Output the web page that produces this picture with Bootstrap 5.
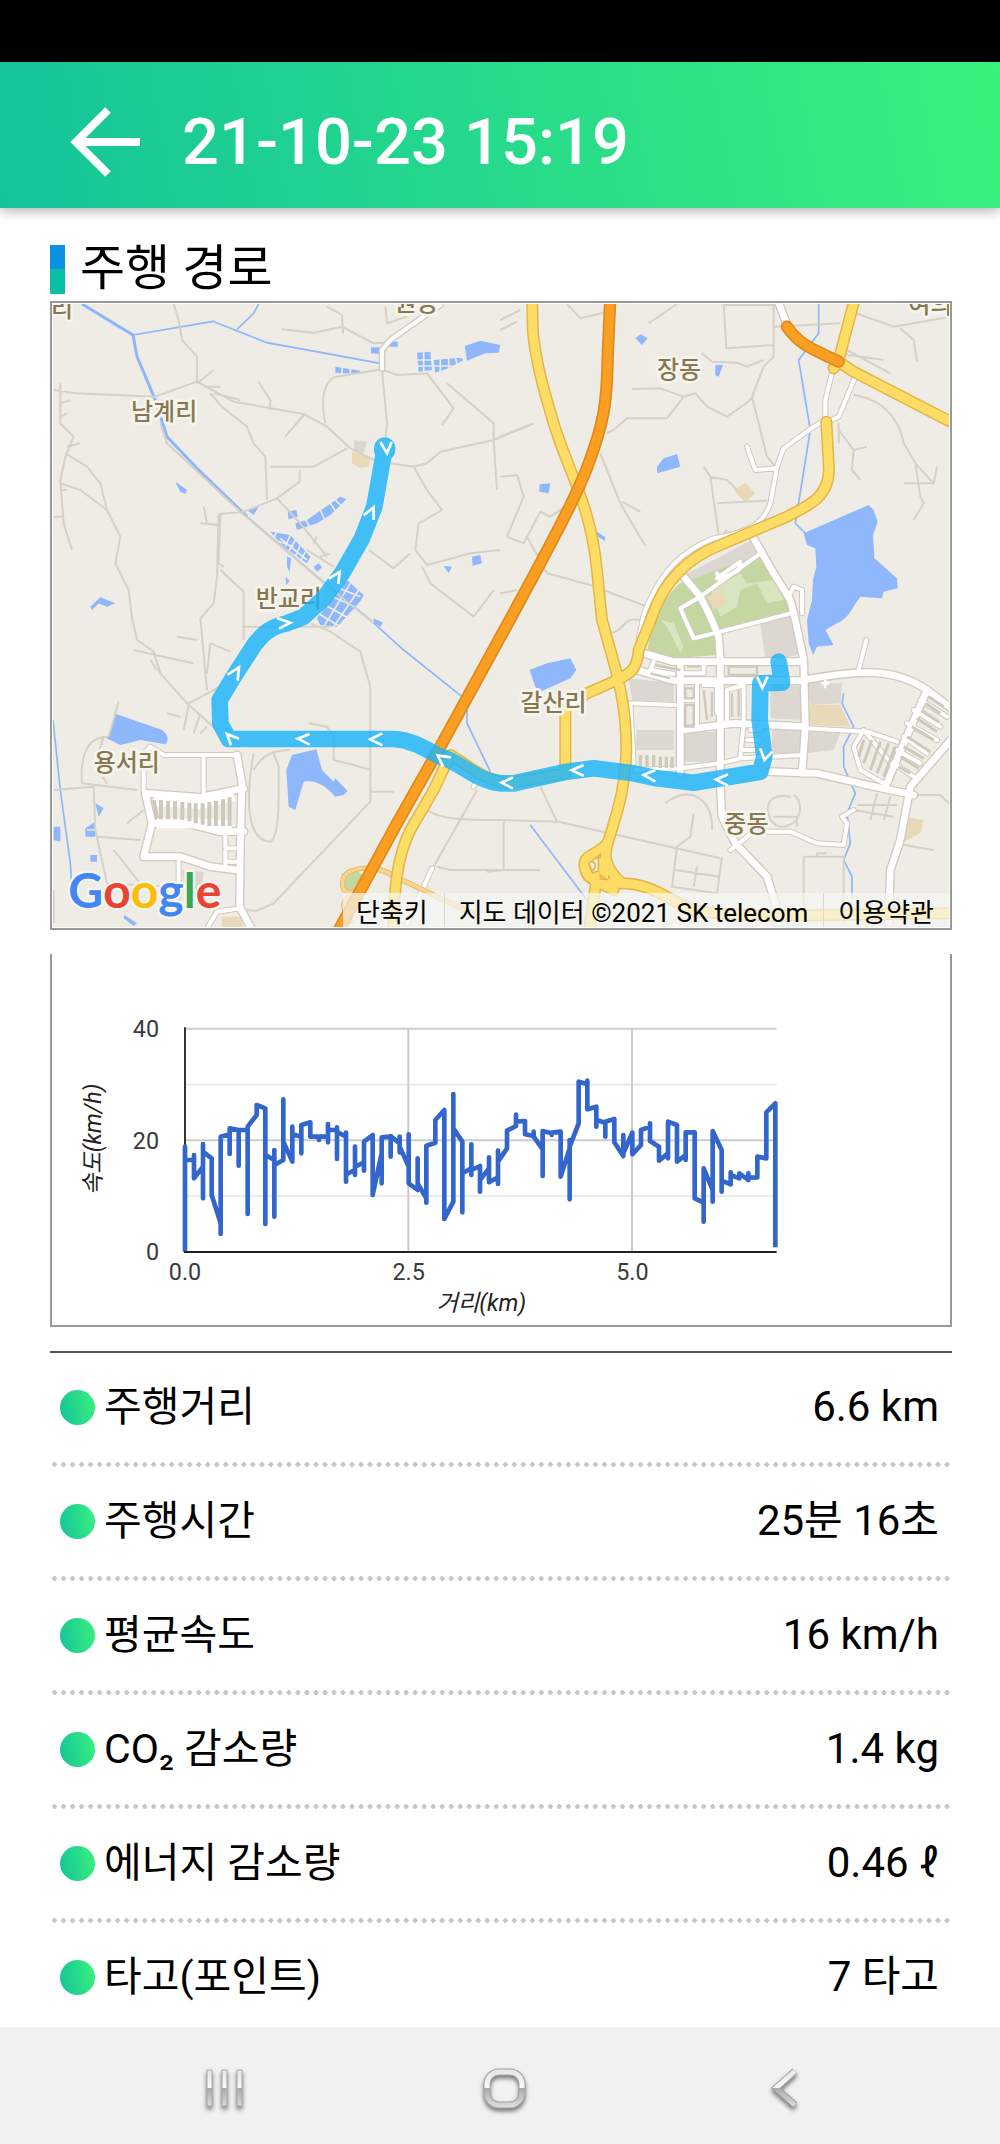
<!DOCTYPE html>
<html lang="ko">
<head>
<meta charset="utf-8">
<meta name="viewport" content="width=device-width, initial-scale=1">
<title>주행 기록</title>
<link href="https://cdn.jsdelivr.net/npm/bootstrap@5.3.0/dist/css/bootstrap.min.css" rel="stylesheet">
<style>
body{font-family:Roboto,"Noto Sans CJK KR",sans-serif;color:#000;background:#fff}
.statusbar{height:62px;background:#000}
.appbar{height:146px;padding:14px 66px 0;gap:36px;background:linear-gradient(80deg,#14c39a,#39f17c);box-shadow:0 2px 12px rgba(0,0,0,.35)}
.appbar h1{font-size:65px;line-height:80px;font-weight:500;color:#fff}
.back-btn{width:80px;height:80px}
.page{padding:29px 48px 0 50px}
.section-title{height:64px;font-size:49px;line-height:60px;gap:15px;font-weight:400}
.title-bar{width:15px;height:49px;background:linear-gradient(#0d90e0 50%,#08c1a4 50%)}
.map-box{border:2px solid #999;padding:1px}
.map-box svg,.chart-box svg{display:block;width:100%;height:auto}
.attribution{right:1px;bottom:1px;height:34px;background:rgba(245,245,243,.72);font-size:26px;line-height:40px;padding:0 0 0 13px}
.attribution a{color:#000;text-decoration:none;padding-right:16px}
.attribution a+a{border-left:1px solid #dcd9cf;padding-left:14px;padding-right:15px}
.chart-box{border:2px solid #999;border-top:0;margin-top:24px}
.stats{margin-top:24px;border-top:2px solid #555}
.stats li{padding:31px 13px 37px 10px;font-size:41px;line-height:46px;position:relative}
.stats li:not(:last-child)::after{content:"";position:absolute;left:0;right:0;bottom:0;height:5px;background:radial-gradient(circle closest-side,#c6c6c6 90%,transparent) 0 0/9px 5px round}
.stats li:last-child{padding-bottom:27px}
.bullet{width:35px;height:35px;border-radius:50%;margin-right:9px;background:linear-gradient(80deg,#14c39a,#39f17c)}
.stat-value{font-size:42px}
.navkeys{height:117px;background:#f1f1f1;padding:4px 174px 0 182px}
.navkeys button{width:84px;height:84px}
.navkeys button svg{filter:drop-shadow(0 3px 2px rgba(0,0,0,.5))}
.place{font:500 72px "Noto Sans CJK KR",sans-serif;fill:#877850;stroke:#f6f4ee;stroke-width:16;stroke-linejoin:round;paint-order:stroke}
.brand{font:700 144px Lato,sans-serif;stroke:#f6f4ee;stroke-width:14;stroke-linejoin:round;paint-order:stroke}
.lane{fill:none;stroke:#d5d1c7;stroke-width:6;stroke-linejoin:round}
.wline{fill:none;stroke:#8db6fb;stroke-width:5}
.case,.fillr{fill:none;stroke-linejoin:round;stroke-linecap:round}
.tick{font:70px Roboto,sans-serif;fill:#3a3a3a}
.axis-name{font:italic 70px Roboto,"Noto Sans CJK KR",sans-serif;fill:#222}
</style>
<script src="https://cdn.jsdelivr.net/npm/bootstrap@5.3.0/dist/js/bootstrap.bundle.min.js"></script>
</head>
<body>
<div class="statusbar"></div>
<header class="appbar d-flex align-items-center position-relative">
  <button class="back-btn btn p-0 border-0" type="button" aria-label="뒤로">
    <svg width="80" height="80" viewBox="0 0 80 80" fill="none" stroke="#fff" stroke-width="8"><path d="M42 8 10 40 42 72M10 40H74"/></svg>
  </button>
  <h1 class="m-0">21-10-23 15:19</h1>
</header>

<main class="page">
  <h2 class="section-title d-flex align-items-center m-0"><span class="title-bar"></span>주행 경로</h2>

  <div class="map-box position-relative">
    <svg viewBox="38 42 2688 1869" role="img" aria-label="주행 경로 지도">
      <defs>
        <!-- white streets -->
        <g id="wide">
          <path d="M2212 30 2242 110M2140 745 2200 850 2250 930 2265 990 2290 1110 2295 1310 2285 1450M1930 860 1980 920 2010 980 2035 1040 2040 1120V1490L2045 1580 2085 1660 2180 1760 2205 1840 2210 1900M1810 1090 1900 1115H2290M1790 1140 1900 1172 2280 1172C2450 1140 2560 1130 2660 1200L2740 1260M1925 1320 2080 1300 2295 1310M1920 1115V1450M2190 1445 2330 1450 2480 1485 2620 1515M2740 1340 2610 1490 2580 1650 2550 1740 2545 1900M2660 1200 2560 1430 2540 1480M315 1510 480 1522 610 1495M590 1395 605 1480 600 1660 598 1850 640 1930M315 1510 335 1600 310 1700 420 1700 510 1730 590 1740M335 1600 440 1600 540 1625 610 1625"/>
        </g>
        <g id="thin">
          <path d="M2375 250 2355 330V390L2320 410 2230 475 2210 530 2190 640C2170 700 2130 725 2020 745 1930 780 1860 840 1810 975L1795 1050M2445 260 2395 380 2355 400M2120 470 2145 540 2210 535M2160 790 1980 920 1920 955 1960 1045 2020 1030 2260 968M2285 970V900L2260 890 2250 910M2030 865 2100 815 2095 840 2040 870 2030 850M2295 1315 2480 1325 2570 1355M2455 1140 2478 1050M2095 1660 2140 1625 2250 1625 2330 1660 2410 1665 2420 1600 2405 1580 2440 1560M2070 1680 2115 1645M1780 1240 1905 1245M1770 1240 1780 1420M1785 1440 1920 1435 2040 1420 2100 1405 2290 1395M2050 1115V1110M310 1505V1390L330 1370 370 1395H590M490 1395V1505M415 1710V1820M500 1915 530 1865 600 1855M555 1625V1670M590 1625H615M560 1675H590M560 1715H590M555 1680V1725M1175 1735 1100 1900M1300 1490 1312 1465"/>
          <path d="M1840 1115 1830 1140 1900 1152M1990 1122V1150H1930M1970 1180V1300M1990 1185H2030V1270M2110 1185 2060 1200V1290M2110 1185V1290M2110 1300 2100 1400M2130 1320H2160M2120 1350H2160M2110 1380H2160M1925 1230H1965M2560 1430 2470 1320 2440 1370 2460 1440 2530 1480M2640 1230 2720 1280M2620 1260 2700 1310M2600 1300 2690 1350M2590 1340 2660 1390M2570 1380 2640 1420M2560 1420 2620 1460"/>
        </g>
        <g id="yellow"><path d="M1475 20 1478 130C1490 240 1520 330 1540 400 1570 500 1620 600 1640 680 1670 780 1672 880 1685 990L1710 1080C1745 1200 1758 1280 1758 1380 1755 1480 1740 1540 1705 1650 1690 1690 1690 1730 1740 1775M2358 395 2366 540C2364 620 2310 645 2240 680L2040 765C1950 800 1870 870 1835 980L1795 1080C1790 1140 1770 1150 1730 1170L1640 1210 1575 1250V1450L1400 1480C1330 1470 1290 1430 1230 1395L1180 1500 1110 1620C1070 1700 1060 1800 1060 1930M2445 20 2395 210 2380 235M2395 215 2440 245 2740 400M1700 1660C1670 1700 1620 1690 1635 1740 1645 1780 1700 1780 1740 1780 1840 1780 1880 1830 1960 1860 2100 1890 2500 1870 2740 1870M1670 1760 1645 1930M1690 1680V1775M1660 1770 1720 1800"/></g>
        <g id="orange"><path d="M1710 20 1702 200C1700 340 1690 400 1645 520 1610 620 1500 820 1408 990L1200 1370 1070 1600 890 1930M2240 110C2275 160 2300 170 2395 215"/></g>
      </defs>
      <rect x="38" y="42" width="2688" height="1869" fill="#eeece4"/>

      <!-- built-up blocks and parks -->
      <g fill="#dcd7d1">
        <path d="M1940 850 2040 800 2140 745 2160 790 2030 860 1975 900zM2160 1000 2255 975 2275 1095 2175 1110zM1765 1165 1900 1180V1235L1775 1230zM1925 1330 2030 1325V1415H1925zM2300 1175 2405 1180 2400 1240 2310 1245zM2190 1180 2280 1190 2285 1290 2190 1285zM2195 1320 2285 1320 2280 1390 2195 1390zM2300 1320 2400 1330 2380 1380 2300 1390zM1790 1320H1900V1380H1785zM425 1740 490 1745 485 1800 430 1790zM940 450 980 455 970 490 940 480z"/>
      </g>
      <path d="M1920 880 2160 795 2190 830 2250 930 2260 968 2020 1030 2030 1095 1900 1105 1820 1085C1840 990 1870 920 1920 880z" fill="#c5d7a0"/>
      <path d="M2010 900 2100 850 2120 880 2200 870 2230 930 2180 940 2150 880 2100 900 2090 950 2040 980zM1860 990 1900 1000 1930 1070 1920 1090 1880 1010z" fill="#d9e4c0"/>
      <path d="M2000 920 2040 900 2060 940 2020 960zM2310 1245 2400 1245 2430 1310 2300 1305zM2590 1580 2650 1590 2640 1630 2590 1655zM935 485 990 500 985 530 960 535 935 520zM2080 600 2115 578 2145 610 2115 638zM545 1880 600 1880 610 1912 545 1912z" fill="#ead9b8"/>
      <path d="M905 1750 950 1740 980 1770 950 1800 910 1810z" fill="#c5d7a0"/>

      <!-- lakes, reservoirs and paddies -->
      <g fill="#8fb7fc">
        <path d="M2290 730 2485 645 2500 660 2512 695 2498 735 2502 805 2570 865 2572 895 2530 905 2525 925 2460 920C2430 960 2430 980 2390 1000L2355 1020 2380 1065 2330 1070 2318 1095 2305 1060 2300 990 2315 930 2318 870 2328 830 2325 775 2300 765z"/>
        <path d="M1468 1140 1520 1120 1590 1105 1608 1140 1590 1165 1500 1205 1485 1190zM228 1272 350 1315C380 1320 390 1350 375 1363L300 1350 240 1365 200 1345zM755 1395 828 1378 845 1440 880 1475 885 1465 922 1503 910 1515 885 1520C850 1480 820 1470 790 1475L765 1560 745 1550 738 1440zM1273 168 1320 152 1380 165 1375 188 1335 190 1280 212zM1850 530 1870 505 1910 492 1920 530 1850 550zM1785 145 1800 133 1822 145 1805 165zM2025 225H2048L2035 260 2025 255zM1498 583 1530 580 1525 610 1497 605zM1665 722 1695 742 1693 753 1665 735zM1295 800 1320 795 1325 820 1297 827zM1130 188 1170 185 1175 240 1135 245zM1180 210 1260 203 1270 210 1225 235 1185 248zM885 230 960 242 955 252 885 248zM992 172H1018V192L992 190zM1040 155H1072V170H1045zM742 665 768 660 772 680 745 688zM800 690 900 620 918 628 870 675 830 700 770 720 765 700zM150 950 180 922 225 940 200 950 175 940 155 960zM405 575 440 600 435 612 420 605zM620 660 655 650 640 675zM690 725 750 735 810 800 800 820 730 770zM820 830 835 820 845 832 830 845zM830 985 920 870 970 915 960 935 890 1010 840 1005zM165 1540 190 1555 175 1580zM40 1610H60V1655L40 1650zM135 1615 165 1595V1640H135zM150 1695H170V1715H150zM1000 985 1028 998 1020 1010 1000 997zM252 1875 290 1900 280 1908 250 1885zM1210 828 1235 830 1225 850zM740 800 752 805 748 845 740 830zM735 860 748 872 738 885z"/>
      </g>
      <!-- dykes between the paddies -->
      <g fill="none" stroke="#eeece4" stroke-width="5">
        <path d="M1150 180V250M1130 210H1180M1130 228H1240M1200 205V250M1225 205V250M1245 200 1250 225M905 225V255M930 225V255M790 680 815 720M840 660 860 705M870 640 890 670M885 630 905 650M690 745 760 770M715 715 700 745M750 735 735 770M765 750 745 785M780 765 765 800M795 785 780 815M720 745 800 810M825 965 900 1010M845 940 925 985M865 915 945 950M885 890 960 920M850 1010 930 880M880 1010 955 900M905 1005 970 925M140 1620H170"/>
      </g>
      <g class="wline">
        <path d="M125 42 220 100 278 135 290 200 345 330 380 440 480 545 620 680" stroke-width="9"/>
        <path d="M278 135 518 94 680 158 1020 220M590 118 640 70 655 42M620 680 830 860 990 990 1090 1080 1265 1220M1280 1260V1300L1350 1445M2335 40V130L2275 210 2310 420 2265 700 2300 735M2410 1210 2405 1240 2440 1310 2410 1370V1430L2445 1510 2420 1570 2430 1660 2410 1710 2435 1760V1820M1470 1605 1640 1830M38 1290 60 1500 90 1720 95 1800"/>
      </g>

      <!-- lanes -->
      <g class="lane">
        <path d="M400 42 415 90 425 150 470 200V275L345 320 105 310 40 300M470 275 580 335 790 372 860 410 930 475 1000 510M510 310 545 350 620 410 640 460 675 500 680 630M360 400 380 460 600 665 840 870 1000 1000M725 118 820 128 905 110 1000 160 1035 158M860 50 905 75 908 130M655 275 690 330 688 360M735 440 790 375M855 400C840 330 850 280 880 262L1025 238 1070 255 1160 250 1240 355 1205 405M1025 238 1040 400 1035 450M1050 520 1120 530 1160 520 1200 485 1360 450 1480 400M1220 280 1360 400V450L1370 600M1120 530 1160 600 1205 660 1135 700 1125 780 1160 825 1290 790 1380 780M985 780 1060 835 1110 790M1145 830 1170 880 1300 980 1360 900M920 475 820 530 690 530M778 540V575L710 625 610 665 540 672 535 820 550 830M710 625 780 700 860 800M60 280V400L100 440 75 500 60 570 70 700 95 780M75 490 140 530 180 580 200 660 240 740 225 820 265 900 275 985 290 1050M60 580 120 600 200 660M40 680H70M535 670 530 860 520 940 480 985 500 1200M540 840 610 905V1050M500 1150 510 1060 570 1085M345 1095 460 1120M290 1050 340 1085 360 1150 440 1240 540 1330M280 1080 345 1095M445 1240 540 1190M430 1320 445 1245M605 1010H870M810 1000 870 1025 960 1085 990 1190V1535L700 1840 650 1862 600 1860M750 1380C700 1380 660 1400 640 1440M640 1390C620 1500 610 1650 690 1655 720 1640 715 1500 715 1430L700 1390M805 1300 860 1310 880 1340V1410L940 1425 990 1440M990 1505H1060M1160 1560C1200 1590 1280 1590 1380 1590L1555 1595 2040 1705M1310 1500 1180 1730 1100 1900M1190 1730 1230 1740H1500M1500 1490 1550 1595M1390 1590V1740L1340 1745M235 1235 205 1340M200 1340C130 1340 120 1420 125 1480L290 1500M40 1500 160 1490 165 1620 200 1780 380 1790M170 1640 300 1650M220 1680 300 1780M200 1480C160 1430 170 1400 190 1340M40 1800V1900"/>
        <path d="M1580 42 1620 85 1690 68M1825 100 1910 42M2050 42 2058 175 2200 165M2050 45H2200V200L2170 230 2135 320 2160 420 2180 500 2205 530M1985 190 2015 215 2090 218 2120 230 2170 210M1775 297 1860 295 1930 320 1965 310 2000 350 2060 380 2110 345 2140 320M1930 320 1880 385 1760 385 1720 420 1700 430M1680 490 1740 640 1815 768M1745 635 1800 665M1990 530 2010 560 2030 700 2035 740M2010 560 2060 570 2090 600M2030 640 2180 632M2060 720 2030 760M2200 110 2400 100M2420 60 2560 110 2730 80M2580 115 2620 150 2630 215M2420 180 2550 250M2430 195 2530 210M2440 315C2540 330 2580 400 2590 460L2625 520 2640 620 2650 640 2620 690M2625 520 2680 580 2690 530M2590 580H2680M2395 400V460M2395 420 2440 480 2480 470M2440 480 2435 540 2460 570M1380 560 1430 555 1450 620 1400 740M1400 740 1450 760 1500 665 1530 680 1620 620M1460 740 1520 850 1650 885 1820 950M1380 910 1430 900M1710 1030C1760 1020 1740 980 1800 990M1875 1540C1950 1480 2020 1530 2015 1620M1960 1570 1950 1640 1910 1670 1895 1790 2030 1810 2045 1700M1905 1740 2040 1760M1970 1730 1960 1790M2250 1520C2160 1500 2170 1600 2220 1610 2290 1610 2290 1530 2260 1515M2200 1580H2270V1610M2290 1700H2410V1900M2290 1700V1860H2400M2330 1700V1690H2360M2620 1515H2700L2726 1540M2590 1665 2680 1680M2440 1560 2560 1580M2450 1545 2570 1545M2510 1510 2490 1590M2550 1520 2530 1590"/>
        <path d="M1380 90 1440 60M1380 120 1430 95M1380 440 1480 400M1035 50 1040 100 1100 80M470 280 520 240M490 290 540 290M520 310 600 330M60 340 90 330M60 380 80 370M80 470 120 460M60 600 80 600M480 700 540 705M490 650 500 700M800 780 880 830M820 760 830 740M840 800 870 790M410 1040 470 1050M350 1140 330 1110M380 1270 420 1280M460 1330 480 1270M500 1310 480 1330M260 1600 310 1560M2400 180 2430 200"/>
      </g>

      <g class="case" stroke="#d0cabf"><use href="#wide" stroke-width="28"/><use href="#thin" stroke-width="18"/></g>
      <g class="fillr" stroke="#fff"><use href="#wide" stroke-width="20"/><use href="#thin" stroke-width="12"/></g>
      <path d="M1025 236V180L1050 150 1200 45" class="case" stroke="#d0cabf" stroke-width="20"/>
      <path d="M1025 236V180L1050 150 1200 45" class="fillr" stroke="#fff" stroke-width="12"/>

      <!-- housing blocks -->
      <g stroke="#fff" stroke-width="30"><path d="M340 1532 480 1542 580 1518M350 1600H450L575 1605" fill="none"/></g>
      <g stroke="#cfc9bc" fill="none" stroke-width="12">
        <path d="M340 1530 350 1585M362 1530V1588M383 1532V1588M404 1534V1588M426 1536V1590M447 1538V1594M466 1540V1600M487 1540V1604M507 1536V1608M527 1532V1608M548 1528V1608M568 1522V1608"/>
        <path d="M1800 1395V1430M1820 1395V1430M1840 1395V1430M1860 1400V1434M1878 1400V1434M1895 1400V1434" stroke-width="10"/>
        <path d="M2470 1350 2455 1400M2495 1350 2470 1420M2520 1355 2490 1440M2545 1360 2510 1450M2565 1370 2530 1460M2665 1220 2710 1250M2655 1240 2700 1270M2645 1262 2695 1295M2630 1285 2690 1325M2615 1310 2680 1350M2600 1340 2670 1385M2590 1370 2650 1405M2580 1400 2635 1435M2575 1430 2610 1450" stroke-width="9"/>
        <path d="M1845 1125 1920 1140M1830 1150 1890 1165M1935 1195H1960V1225H1935zM1935 1245H1960V1310H1935zM1990 1200 2000 1290M2015 1205V1280M2075 1210V1280M2095 1200V1280M2065 1130H2150V1155H2065zM1940 1130H1980" stroke-width="7"/>
      </g>

      <!-- ramps by the interchange -->
      <g class="case"><path d="M960 1800C900 1830 895 1770 920 1750 970 1720 1040 1740 1060 1760 1140 1790 1220 1840 1300 1870M930 1890C900 1850 905 1830 940 1810" stroke="#e3bd72" stroke-width="16"/><path d="M960 1800C900 1830 895 1770 920 1750 970 1720 1040 1740 1060 1760 1140 1790 1220 1840 1300 1870M930 1890C900 1850 905 1830 940 1810" stroke="#fbd38a" stroke-width="10"/></g>

      <use href="#yellow" class="case" stroke="#e3b548" stroke-width="36"/>
      <use href="#yellow" class="fillr" stroke="#fedd66" stroke-width="27"/>
      <path d="M1645 1720C1660 1705 1675 1730 1655 1742zM1668 1702 1680 1692V1702zM1680 1755 1698 1768 1680 1766z" fill="#eeece4" stroke="#e3b548" stroke-width="5"/>
      <use href="#orange" class="case" stroke="#dd8a1c" stroke-width="37"/>
      <use href="#orange" class="fillr" stroke="#fa9f22" stroke-width="27"/>
      <path d="M2355 1170V1195M2343 1180H2368" stroke="#fff" stroke-width="8"/>

      <g class="place">
        <text x="272" y="390">남계리</text>
        <text x="646" y="952">반교리</text>
        <text x="160" y="1442">용서리</text>
        <text x="1850" y="265">장동</text>
        <text x="1440" y="1262">갈산리</text>
        <text x="2052" y="1625">중동</text>
        <text x="32" y="80">리</text>
        <text x="1062" y="62">원동</text>
        <text x="2604" y="70">여의</text>
      </g>

      <!-- driven route -->
      <g fill="none" stroke="#17b3fb" stroke-linejoin="round" stroke-linecap="round" opacity=".8">
        <path d="M1033 475 1018 560 1002 650 965 745 905 850 850 925 790 980 740 1000C690 1010 670 1030 645 1060L580 1160 538 1230 540 1300 565 1347H1060C1120 1350 1160 1380 1200 1400 1260 1415 1300 1470 1380 1480H1420L1580 1445 1660 1435 1780 1450 1850 1465 1960 1478 2070 1460 2160 1445 2172 1400 2158 1290 2160 1180 2225 1178 2215 1115" stroke-width="50"/>
        <path d="M1033 474V480" stroke-width="64"/>
      </g>
      <g fill="none" stroke="#fff" stroke-width="8">
        <path d="M1020 456 1040 490 1054 456M970 676 1000 652V690M865 866 898 846 894 882M710 984 750 998 716 1016M562 1154 596 1132 592 1172M572 1366 560 1332 596 1346M808 1332 772 1346 808 1364M1026 1330 990 1348 1026 1366M1208 1430 1192 1396 1232 1402M1418 1462 1384 1478 1418 1496M1630 1425 1594 1441 1630 1457M1845 1440 1810 1455 1845 1475M2063 1453 2027 1469 2063 1487M2150 1160 2166 1194 2182 1160M2160 1375 2172 1410 2196 1385"/>
      </g>

      <text class="brand" x="84" y="1855"><tspan fill="#4285f4">G</tspan><tspan fill="#ea4335">o</tspan><tspan fill="#fbbc05">o</tspan><tspan fill="#4285f4">g</tspan><tspan fill="#34a853">l</tspan><tspan fill="#ea4335">e</tspan></text>
    </svg>
    <div class="attribution position-absolute d-flex text-nowrap">
      <a href="#shortcuts">단축키</a><a href="#mapdata">지도 데이터 ©2021 SK telecom</a><a href="#terms">이용약관</a>
    </div>
  </div>

  <div class="chart-box">
    <svg viewBox="36 42 2694 1113" role="img" aria-label="거리별 속도 그래프">
      <g fill="none" stroke-width="6">
        <path d="M435 434H2210M435 768H2210" stroke="#ebebeb"/>
        <path d="M435 266H2210M435 601H2210M1105 266V935M1776 266V935" stroke="#ccc"/>
        <path d="M435 262V935" stroke="#333"/>
      </g>
      <path id="speed" fill="none" stroke="#3366cc" stroke-width="14" stroke-linejoin="round"/>
      <path d="M432 936H2210" stroke="#222" stroke-width="6"/>
      <g class="tick" text-anchor="end"><text x="357" y="290">40</text><text x="357" y="626">20</text><text x="357" y="961">0</text></g>
      <g class="tick" text-anchor="middle"><text x="435" y="1020">0.0</text><text x="1106" y="1020">2.5</text><text x="1777" y="1020">5.0</text></g>
      <g class="axis-name" text-anchor="middle"><text x="1324" y="1112">거리(km)</text><text transform="translate(184 598) rotate(-90)">속도(km/h)</text></g>
    </svg>
  </div>

  <ul class="stats list-unstyled mb-0">
    <li class="d-flex align-items-center"><span class="bullet"></span><span>주행거리</span><span class="stat-value ms-auto">6.6 km</span></li>
    <li class="d-flex align-items-center"><span class="bullet"></span><span>주행시간</span><span class="stat-value ms-auto">25분 16초</span></li>
    <li class="d-flex align-items-center"><span class="bullet"></span><span>평균속도</span><span class="stat-value ms-auto">16 km/h</span></li>
    <li class="d-flex align-items-center"><span class="bullet"></span><span>CO₂ 감소량</span><span class="stat-value ms-auto">1.4 kg</span></li>
    <li class="d-flex align-items-center"><span class="bullet"></span><span>에너지 감소량</span><span class="stat-value ms-auto">0.46 ℓ</span></li>
    <li class="d-flex align-items-center"><span class="bullet"></span><span>타고(포인트)</span><span class="stat-value ms-auto">7 타고</span></li>
  </ul>
</main>

<nav class="navkeys d-flex justify-content-between align-items-center position-relative" aria-label="시스템 탐색">
  <button class="btn p-0 border-0" type="button" aria-label="최근 앱"><svg width="84" height="84" viewBox="0 0 84 84"><defs><linearGradient id="metal" gradientUnits="userSpaceOnUse" x1="0" y1="23" x2="0" y2="61"><stop offset="0" stop-color="#e4e4e4"/><stop offset=".49" stop-color="#fafafa"/><stop offset=".5" stop-color="#a9a9a9"/><stop offset="1" stop-color="#dedede"/></linearGradient></defs><path d="M25 24h5v36h-5zM40 24h5v36h-5zM55 24h5v36h-5z" fill="url(#metal)" stroke="#aaa"/></svg></button>
  <button class="btn p-0 border-0" type="button" aria-label="홈"><svg width="84" height="84" viewBox="0 0 84 84"><rect x="25" y="26" width="35" height="33" rx="12" fill="none" stroke="#a2a2a2" stroke-width="7"/><rect x="25" y="26" width="35" height="33" rx="12" fill="none" stroke="url(#metal)" stroke-width="5"/></svg></button>
  <button class="btn p-0 border-0" type="button" aria-label="이전"><svg width="84" height="84" viewBox="0 0 84 84" fill="none"><path d="M53 25 34 42 53 59" stroke="#a2a2a2" stroke-width="7"/><path d="M53 25 34 42 53 59" stroke="url(#metal)" stroke-width="5"/></svg></button>
</nav>

<script>
// Plot heights sampled every 100 m; several readings can share one distance.
const samples = [[935,620,660],[660,645,715],[680,775,612,635],[655,765],[850,882,590],[583,642,565],[570,677,570],[570,822,560],[525,495],[505,852,645],[660,830,630,675],[660,478,605],[665,560,583],[590,640,555],[547,590],[590,600,590],[590,607,552,570],[570,657,562,575],[590,578,725,703],[690,705,620,680],[668,692,605],[585,765],[640,730,592],[590,650,588],[610,637,590,620],[680,583,730],[750,655,730],[775,788,617],[608,540],[510,837],[785,462,565],[605,817,700],[685,705,613,690],[678,755,720],[685,652,727],[712,732,632,665],[625,572],[558,524,545],[543,583],[588,575,590],[628,708,573],[580,585,578],[575,710],[625,778,600,620],[550,425],[432,422,508],[500,560,540],[548,590,545],[537,607],[648,585,640],[578,643],[615,570],[560,550,603],[620,662],[640,655,545],[555,665],[645,660,577],[577,775],[788,845,685],[750,785,573],[630,755,722],[733,697,705],[715,700],[720,700,713],[712,650],[655,517],[490,922]];
const pts = samples.flatMap((ys, k) => ys.map(y => Math.round(435 + k * 26.83) + ' ' + y));
document.getElementById('speed').setAttribute('d', 'M' + pts.join('L'));
</script>
</body>
</html>
